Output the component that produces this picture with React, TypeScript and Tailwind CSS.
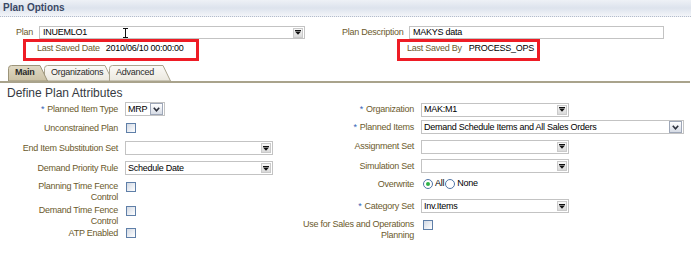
import React from 'react';

const label = 'text-[#6b5a2c]';

function DropArrow() {
  return (
    <span className="flex h-[10px] w-[10px] shrink-0 items-center justify-center border border-[#cacaca] bg-gradient-to-b from-[#f8f8f8] to-[#d9d9d9]">
      <svg width="6" height="5" viewBox="0 0 6 5">
        <rect x="0" y="0" width="6" height="1" fill="#111" />
        <path d="M0 1.6h6L3 4.8z" fill="#111" />
      </svg>
    </span>
  );
}

function ChevronButton() {
  return (
    <span className="flex h-[12px] w-[13px] shrink-0 items-center justify-center border border-[#9ea7b8] bg-gradient-to-b from-white to-[#d6dbe5]">
      <svg width="7" height="5" viewBox="0 0 7 5">
        <path d="M0.8 0.8L3.5 3.8L6.2 0.8" stroke="#2b2f3a" strokeWidth="1.6" fill="none" />
      </svg>
    </span>
  );
}

function Select({ w, value, chevron }: { w: string; value?: string; chevron?: boolean }) {
  return (
    <div className={`flex h-[14px] shrink-0 items-center justify-between border border-[#c3c3c3] bg-white pl-[2px] pr-[1px] ${w}`}>
      <span className="shrink-0 whitespace-nowrap leading-none text-black">{value}</span>
      {chevron ? <ChevronButton /> : <DropArrow />}
    </div>
  );
}

function Checkbox() {
  return <span className="block h-[10px] w-[10px] shrink-0 border border-[#5f7fa8] bg-gradient-to-br from-[#d2d9e4] to-white" />;
}

function Radio({ on }: { on?: boolean }) {
  return (
    <span className="flex h-[10px] w-[10px] shrink-0 items-center justify-center rounded-full border border-[#4f74a6] bg-white">
      {on && <span className="h-[4px] w-[4px] rounded-full bg-[#2fb34a]" />}
    </span>
  );
}

function Req() {
  return <span className="mr-[3px] text-[#3563b6]">*</span>;
}

function Row({
  h,
  text,
  children,
  top,
}: {
  h: string;
  text: React.ReactNode;
  children: React.ReactNode;
  top?: string;
}) {
  return (
    <div className={`flex ${top ? 'items-start ' + top : 'items-center'} ${h}`}>
      <span className={`w-[118px] shrink-0 text-right leading-[10.5px] ${label}`}>{text}</span>
      <div className={`ml-[7px] flex items-center ${top ? 'pt-[1px]' : ''}`}>{children}</div>
    </div>
  );
}

function Tab({ text, w, active }: { text: string; w: number; active?: boolean }) {
  return (
    <div className={`relative -mr-[4px] flex h-[16px] items-center ${active ? 'z-10 font-bold' : ''}`} style={{ width: w }}>
      <svg className="absolute inset-0" width={w} height="16" viewBox={`0 0 ${w} 16`}>
        <defs>
          <linearGradient id={`g-${text}`} x1="0" y1="0" x2="0" y2="1">
            <stop offset="0" stopColor={active ? '#e0d9c4' : '#fbfaf7'} />
            <stop offset="1" stopColor={active ? '#cbc2a6' : '#ebe8df'} />
          </linearGradient>
        </defs>
        <path
          d={`M0.5 16 L0.5 3.5 Q0.5 0.5 3.5 0.5 L${w - 8} 0.5 L${w - 0.5} 16 Z`}
          fill={`url(#g-${text})`}
          stroke={active ? '#9c9479' : '#aaa48e'}
        />
      </svg>
      <span className="relative pl-[7px] text-[#2a2a2a]">{text}</span>
    </div>
  );
}

export default function App() {
  return (
    <div className="h-[258px] w-[696px] overflow-hidden bg-white font-['Liberation_Sans',Arial,sans-serif] text-[9px] tracking-[-0.25px] text-black">
      {/* header */}
      <div className="h-[17px] w-[691px] border-b border-dotted border-[#b4bccb] bg-gradient-to-b from-[#eef1f6] via-[#dde3ed] to-[#f3f5f9] pl-[3px] text-[10px] font-bold leading-[16px] tracking-normal text-[#3a4865]">
        Plan Options
      </div>

      {/* plan row */}
      <div className="mt-[9px] flex h-[13px] items-center">
        <span className={`ml-[16px] w-[23px] ${label}`}>Plan</span>
        <div className="relative flex h-[13px] w-[266px] items-center justify-between border border-[#c3c3c3] pl-[3px] pr-[1px]">
          <span className="leading-none">INUEMLO1</span>
          <DropArrow />
          <svg className="absolute left-[82px] top-[1px]" width="7" height="10" viewBox="0 0 7 10">
            <path d="M1 0.5h5M1 9.5h5M3.5 0.5v9" stroke="#111" strokeWidth="1" fill="none" />
          </svg>
        </div>
        <span className={`ml-[37px] w-[67px] ${label}`}>Plan Description</span>
        <div className="flex h-[13px] w-[255px] items-center border border-[#c3c3c3] pl-[3px] leading-none">MAKYS data</div>
      </div>

      {/* last saved row */}
      <div className="flex h-[22px]">
        <div className="ml-[23px] flex h-[22px] w-[176px] items-start border-[3px] border-[#ee1c25] pl-[11px] pt-[1px] leading-[11px]">
          <span className={label}>Last Saved Date</span>
          <span className="ml-[6px]">2010/06/10 00:00:00</span>
        </div>
        <div className="ml-[198px] flex h-[22px] w-[143px] items-start border-[3px] border-[#ee1c25] pl-[7px] pt-[1px] leading-[11px]">
          <span className={label}>Last Saved By</span>
          <span className="ml-[7px]">PROCESS_OPS</span>
        </div>
      </div>

      {/* tabs */}
      <div className="mt-[4px] flex h-[16px] pl-[8px]">
        <Tab text="Main" w={40} active />
        <Tab text="Organizations" w={69} />
        <Tab text="Advanced" w={62} />
      </div>
      <div className="h-[2px] w-[690px] bg-[#a9a38c]" />

      <div className="mt-[3px] pl-[7px] text-[12px] leading-[14px] tracking-normal text-[#363a42]">Define Plan Attributes</div>

      <div className="flex">
        {/* left column */}
        <div className="flex w-[296px] flex-col">
          <Row h="h-[18px]" text={<><Req />Planned Item Type</>}>
            <Select w="w-[40px]" value="MRP" chevron />
          </Row>
          <Row h="h-[20px]" text="Unconstrained Plan">
            <span className="ml-[1px]"><Checkbox /></span>
          </Row>
          <Row h="h-[20px]" text="End Item Substitution Set">
            <Select w="w-[148px]" />
          </Row>
          <Row h="h-[20px]" text="Demand Priority Rule">
            <Select w="w-[148px]" value="Schedule Date" />
          </Row>
          <Row h="h-[25px]" top="pt-[3px]" text={<>Planning Time Fence<br />Control</>}>
            <span className="ml-[1px]"><Checkbox /></span>
          </Row>
          <Row h="h-[23px]" top="pt-[2px]" text={<>Demand Time Fence<br />Control</>}>
            <span className="ml-[1px]"><Checkbox /></span>
          </Row>
          <Row h="h-[14px]" text="ATP Enabled">
            <span className="ml-[1px]"><Checkbox /></span>
          </Row>
        </div>

        {/* right column */}
        <div className="flex flex-col">
          <Row h="h-[19px]" text={<><Req />Organization</>}>
            <Select w="w-[148px]" value="MAK:M1" />
          </Row>
          <Row h="h-[16px]" text={<><Req />Planned Items</>}>
            <Select w="w-[263px]" value="Demand Schedule Items and All Sales Orders" chevron />
          </Row>
          <Row h="h-[23px]" text="Assignment Set">
            <Select w="w-[148px]" />
          </Row>
          <Row h="h-[16px]" text="Simulation Set">
            <Select w="w-[148px]" />
          </Row>
          <Row h="h-[20px]" text="Overwrite">
            <span className="ml-[2px] flex items-center">
              <Radio on />
              <span className="ml-[2px] mr-[1px]">All</span>
              <Radio />
              <span className="ml-[2px]">None</span>
            </span>
          </Row>
          <Row h="h-[24px]" text={<><Req />Category Set</>}>
            <Select w="w-[148px]" value="Inv.Items" />
          </Row>
          <Row h="h-[22px]" top="pt-[1px]" text={<>Use for Sales and Operations<br />Planning</>}>
            <span className="ml-[2px]"><Checkbox /></span>
          </Row>
        </div>
      </div>
    </div>
  );
}
